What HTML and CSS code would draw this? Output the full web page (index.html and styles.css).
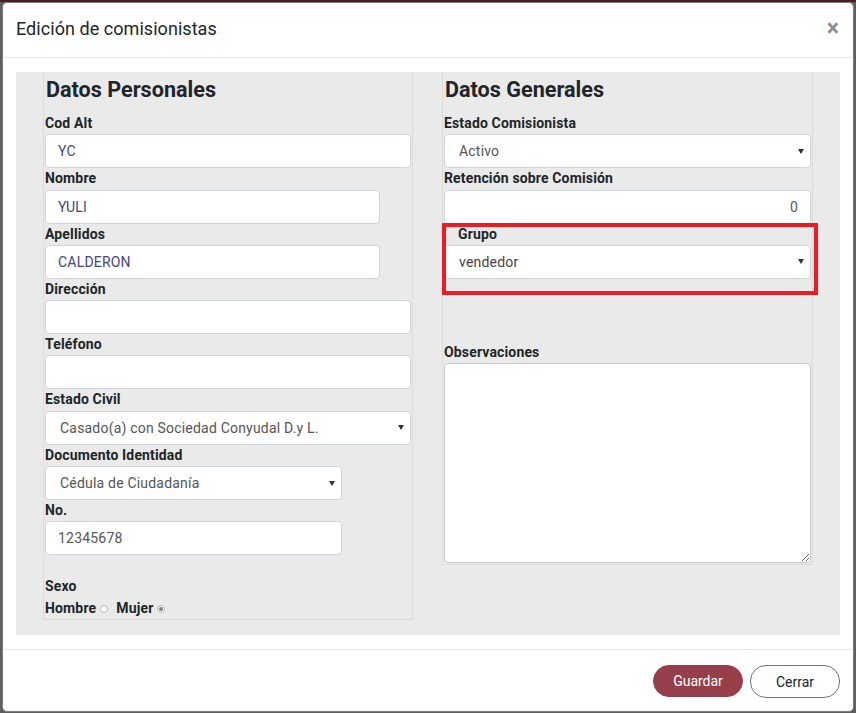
FILE: index.html
```html
<!DOCTYPE html>
<html lang="es">
<head>
<meta charset="utf-8">
<title>Edición de comisionistas</title>
<link rel="stylesheet" href="styles.css">
</head>
<body>
<div class="modal">
  <div class="modal-header">
    <h5 class="modal-title">Edición de comisionistas</h5>
    <span class="close">×</span>
  </div>
  <div class="modal-body">
    <div class="panel">
      <div class="box">
        <h3 class="heading">Datos Personales</h3>
        <label class="label">Cod Alt</label>
        <div class="control value-blue">YC</div>
        <label class="label">Nombre</label>
        <div class="control value-blue w-335">YULI</div>
        <label class="label">Apellidos</label>
        <div class="control value-blue w-335">CALDERON</div>
        <label class="label">Dirección</label>
        <div class="control"></div>
        <label class="label">Teléfono</label>
        <div class="control"></div>
        <label class="label">Estado Civil</label>
        <div class="control select"><span>Casado(a) con Sociedad Conyudal D.y L.</span><svg class="caret" width="6" height="5" viewBox="0 0 6 5"><path d="M0 0H6L3 5Z"/></svg></div>
        <label class="label">Documento Identidad</label>
        <div class="control select w-297"><span>Cédula de Ciudadanía</span><svg class="caret" width="6" height="5" viewBox="0 0 6 5"><path d="M0 0H6L3 5Z"/></svg></div>
        <label class="label">No.</label>
        <div class="control w-297">12345678</div>
        <div class="sexo">
          <label class="label">Sexo</label>
          <div class="radios">
            <span class="label">Hombre</span><span class="radio"></span>
            <span class="label">Mujer</span><span class="radio checked"></span>
          </div>
        </div>
      </div>
      <div class="box">
        <h3 class="heading">Datos Generales</h3>
        <label class="label">Estado Comisionista</label>
        <div class="control select"><span>Activo</span><svg class="caret" width="6" height="5" viewBox="0 0 6 5"><path d="M0 0H6L3 5Z"/></svg></div>
        <label class="label">Retención sobre Comisión</label>
        <div class="control align-right">0</div>
        <div class="grupo">
          <label class="label indent">Grupo</label>
          <div class="control select plain"><span class="dark">vendedor</span><svg class="caret" width="6" height="5" viewBox="0 0 6 5"><path d="M0 0H6L3 5Z"/></svg></div>
          <div class="highlight"></div>
        </div>
        <label class="label obs">Observaciones</label>
        <textarea class="textarea"></textarea>
      </div>
    </div>
  </div>
  <div class="modal-footer">
    <button class="btn btn-primary">Guardar</button>
    <button class="btn btn-outline">Cerrar</button>
  </div>
</div>
</body>
</html>
```

FILE: styles.css
```css
* { box-sizing: border-box; }

html, body {
  margin: 0;
  height: 713px;
  overflow: hidden;
}

body {
  background: linear-gradient(#4b1d25 0, #4b1d25 2px, #5e5e5e 2px, #5e5e5e 100%);
  font-family: Roboto, "Liberation Sans", Arial, sans-serif;
  color: #212529;
  font-size: 14px;
}

.modal {
  margin: 2px 2px 0 2px;
  height: 710px;
  background: #fff;
  border: 1px solid #7a7a7a;
  border-radius: 5px;
  display: flex;
  flex-direction: column;
  overflow: hidden;
}

.modal-header {
  flex: none;
  display: flex;
  align-items: center;
  justify-content: space-between;
  padding: 15px 13px 17px 13px;
  border-bottom: 1px solid #e5e5e5;
}

.modal-title {
  margin: 0;
  font-size: 18px;
  line-height: 22px;
  font-weight: 400;
  letter-spacing: 0.05px;
  color: #212529;
}

.close {
  font-size: 23px;
  line-height: 22px;
  font-weight: 700;
  color: #8f8f8f;
  margin-right: 1px;
}

.modal-body {
  flex: none;
  padding: 14px 13px;
}

.panel {
  background: #eaeaea;
  display: grid;
  grid-template-columns: 370px 371px;
  column-gap: 29px;
  padding: 0 27px 15px 27px;
  align-items: start;
}

.box {
  border: 1px solid #dcdcdc;
  border-top: 0;
  padding: 0 1px 1px 1px;
  display: flex;
  flex-direction: column;
}

.heading {
  margin: 5px 0 10px 1px;
  font-size: 21.6px;
  line-height: 26px;
  font-weight: 700;
  color: #212529;
}

.label {
  display: block;
  font-size: 14px;
  line-height: 21.3px;
  font-weight: 700;
  letter-spacing: 0.15px;
  color: #212529;
}

.control {
  height: 34px;
  width: 100%;
  background: #fff;
  border: 1px solid #ced4da;
  border-radius: 4px;
  padding: 0 12px;
  display: flex;
  align-items: center;
  font-size: 14px;
  letter-spacing: 0.2px;
  color: #555;
}

.value-blue { color: #46467a; }

.w-335 { width: 335px; }
.w-297 { width: 297px; }

.select {
  padding: 0 6px 0 14px;
  justify-content: space-between;
}

.select.plain { padding-left: 14px; }

.caret { fill: #333; flex: none; }

.dark { color: #444; }

.align-right { justify-content: flex-end; }

.sexo { margin-top: 21px; }

.radios {
  display: flex;
  align-items: center;
  height: 20px;
}

.radios .label { line-height: 20px; }

.radio {
  width: 8px;
  height: 8px;
  border: 1px solid #b5b5b5;
  border-radius: 50%;
  background: #fff;
  margin: 2px 8px 0 4px;
  display: flex;
  align-items: center;
  justify-content: center;
}

.radio.checked::before {
  content: "";
  width: 4px;
  height: 4px;
  border-radius: 50%;
  background: #808080;
}

.grupo {
  position: relative;
}

.indent { padding-left: 14px; }

.highlight {
  position: absolute;
  top: -1px;
  left: -2px;
  right: -7px;
  bottom: -16px;
  border: 4px solid #ec1c24;
  pointer-events: none;
}

.obs { margin-top: 63px; }

.textarea {
  display: block;
  width: 100%;
  height: 200px;
  border: 1px solid #c6c9cc;
  border-radius: 4px;
  background: #fff;
  margin: 0;
  font-family: inherit;
}

.modal-footer {
  flex: none;
  margin-top: auto;
  border-top: 1px solid #e5e5e5;
  padding: 15px 13px 13px 13px;
  display: flex;
  justify-content: flex-end;
  gap: 7px;
}

.btn {
  height: 32px;
  border-radius: 16px;
  font-family: Roboto, "Liberation Sans", Arial, sans-serif;
  font-size: 14px;
  padding: 0;
  cursor: pointer;
}

.btn-primary {
  width: 90px;
  background: #963f4b;
  border: 1px solid #963f4b;
  color: #fff;
}

.btn-outline {
  width: 90px;
  height: 33px;
  background: #fff;
  border: 1px solid #6c757d;
  color: #212529;
}
```
